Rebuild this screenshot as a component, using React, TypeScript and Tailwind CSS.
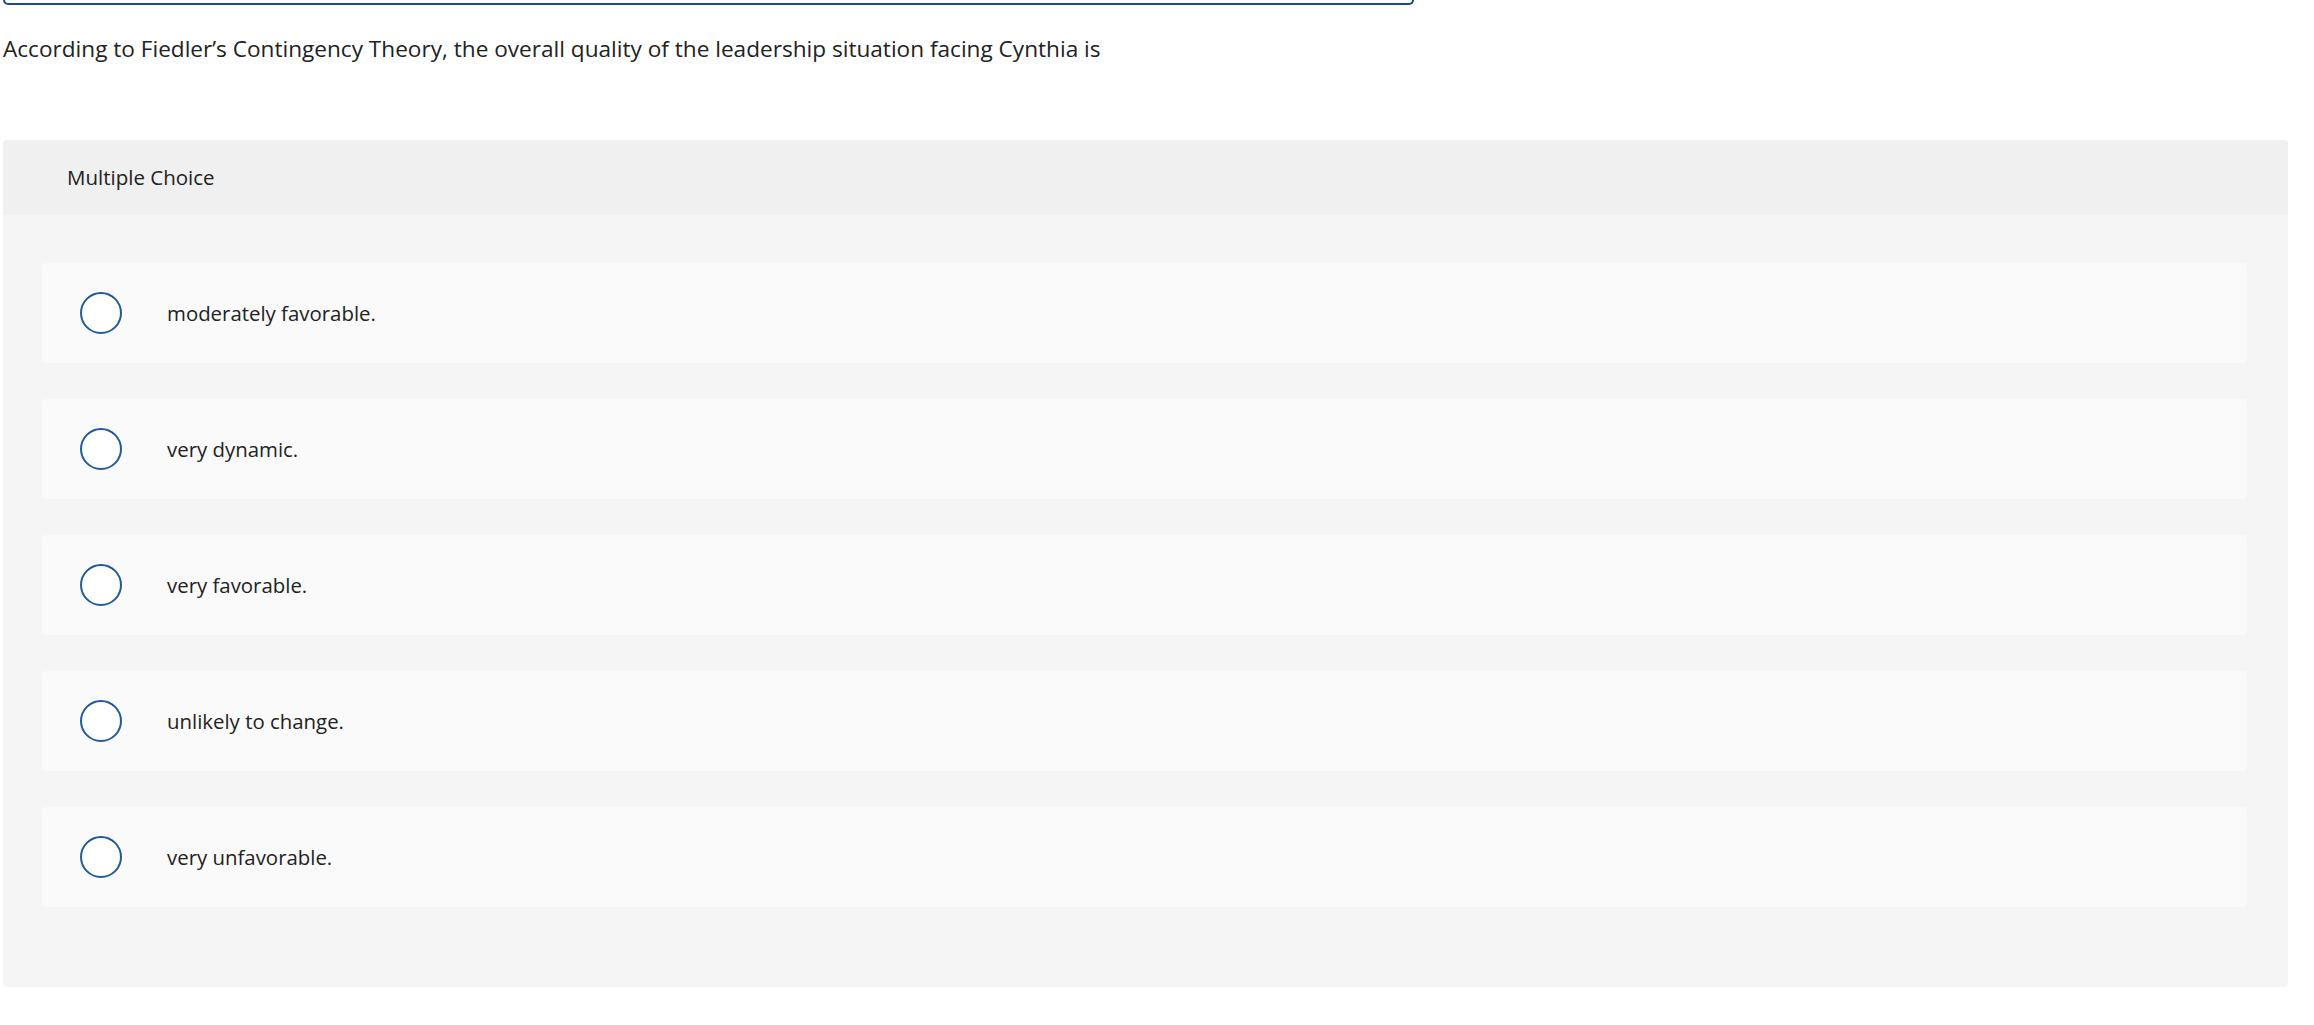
const options = [
  "moderately favorable.",
  "very dynamic.",
  "very favorable.",
  "unlikely to change.",
  "very unfavorable.",
];

export default function App() {
  return (
    <div className="min-h-screen bg-white text-[#222] font-['Open_Sans','Noto_Sans',sans-serif]">
      {/* tail of the previous box, scrolled off the top */}
      <div className="ml-[3px] w-[1411px] h-[5px] border-x-2 border-b-2 border-[#1c4a86] rounded-b-md" />

      <p className="ml-[3px] mt-[29px] text-[22.6px] leading-[30px]">
        According to Fiedler’s Contingency Theory, the overall quality of the leadership situation facing Cynthia is
      </p>

      <section className="ml-[3px] mt-[76px] w-[2285px] rounded bg-[#f5f5f5]">
        <header className="h-[75px] flex items-center pl-[64px] bg-[#f0f0f0] rounded-t text-[20.5px]">
          Multiple Choice
        </header>
        <div className="flex flex-col gap-[36px] pl-[39px] pr-[41px] pt-[48px] pb-[80px]">
          {options.map((opt) => (
            <label
              key={opt}
              className="h-[100px] flex items-center rounded bg-[#fafafa] pl-[38px] cursor-pointer"
            >
              <span className="w-[42px] h-[42px] rounded-full border-2 border-[#1f5b98] bg-white shrink-0" />
              <span className="ml-[45px] text-[20.4px]">{opt}</span>
            </label>
          ))}
        </div>
      </section>
    </div>
  );
}
